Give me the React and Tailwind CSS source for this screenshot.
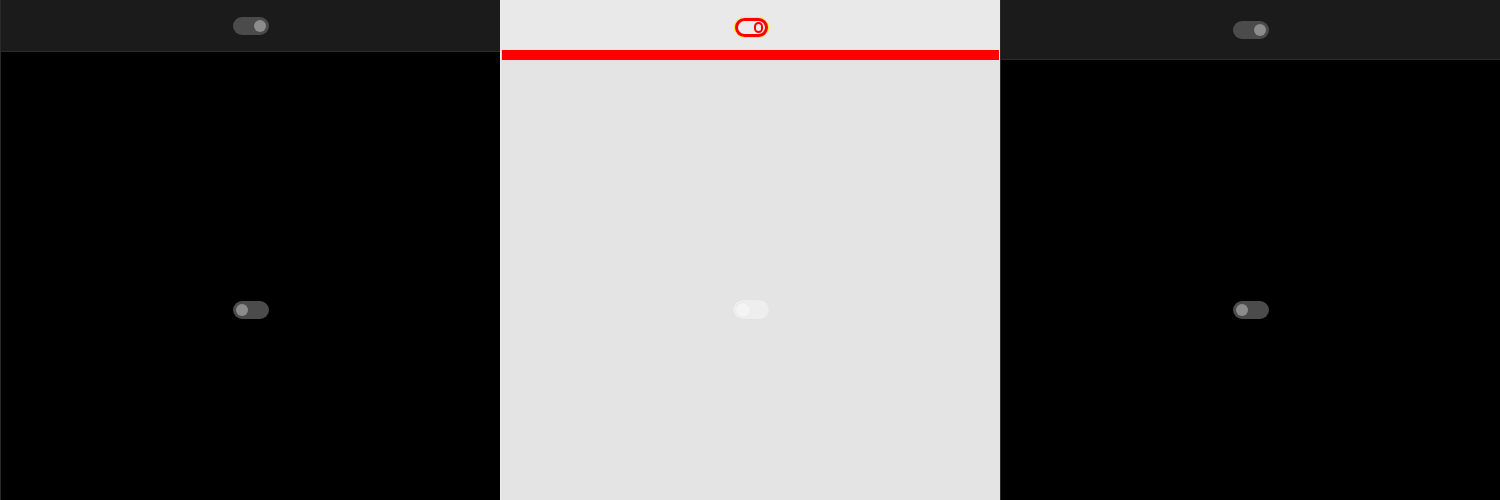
import React from 'react'

// small pill switch, knob side picked by `on`
const Toggle = ({ on, tone = 'dark' }) => {
  if (tone === 'light') {
    return (
      <div className="w-9 h-[19px] rounded-full bg-[#eeeeee] shadow-[0_0_1px_rgba(0,0,0,0.08)] flex items-center px-[3px]">
        <div className="w-[14px] h-[14px] rounded-full bg-[#f4f4f4] shadow-[0_0_2px_rgba(0,0,0,0.06)]" />
      </div>
    )
  }
  return (
    <div className={`w-9 h-[18px] rounded-full bg-[#4b4b4b] flex items-center px-[3px] ${on ? 'justify-end' : 'justify-start'}`}>
      <div className="w-3 h-3 rounded-full bg-[#8c8c8c]" />
    </div>
  )
}

// focused switch with the red / yellow debug rings
const FocusToggle = () => (
  <div className="rounded-full border-[1.5px] border-[#ffee00]">
    <div className="w-[33px] h-[19px] rounded-full border-[3px] border-[#ff0000] bg-[#ececec] flex items-center justify-end pr-[2px]">
      <div className="w-[9px] h-[11px] rounded-full border-[2px] border-[#ff0000] bg-[#ececec]" />
    </div>
  </div>
)

export default function App() {
  return (
    <div className="w-[1500px] h-[500px] flex overflow-hidden">
      {/* left */}
      <div className="w-[500px] h-[500px] flex flex-col bg-black border-l border-[#2a2a2a]">
        <div className="h-[52px] shrink-0 bg-[#1b1b1b] border-b border-[#2c2c2c] flex items-center justify-center pl-[1px]">
          <Toggle on />
        </div>
        <div className="flex justify-center pt-[249px] pl-[1px]">
          <Toggle />
        </div>
      </div>

      {/* middle */}
      <div className="w-[500px] h-[500px] flex flex-col bg-[#e4e4e4] border-l border-[#ededed]">
        <div className="h-[50px] shrink-0 bg-[#e9e9e9] flex items-start justify-center pt-[17px] pl-[1px]">
          <FocusToggle />
        </div>
        <div className="h-[10px] shrink-0 mr-[1px] bg-[#ff0000] border-l border-[#ffee00]" />
        <div className="flex justify-center pt-[240px] pl-[1px]">
          <Toggle tone="light" />
        </div>
      </div>

      {/* right */}
      <div className="w-[500px] h-[500px] flex flex-col bg-black border-l border-[#2a2a2a]">
        <div className="h-[60px] shrink-0 bg-[#1b1b1b] border-b border-[#2c2c2c] flex items-center justify-center pl-[1px]">
          <Toggle on />
        </div>
        <div className="flex justify-center pt-[241px] pl-[1px]">
          <Toggle />
        </div>
      </div>
    </div>
  )
}
